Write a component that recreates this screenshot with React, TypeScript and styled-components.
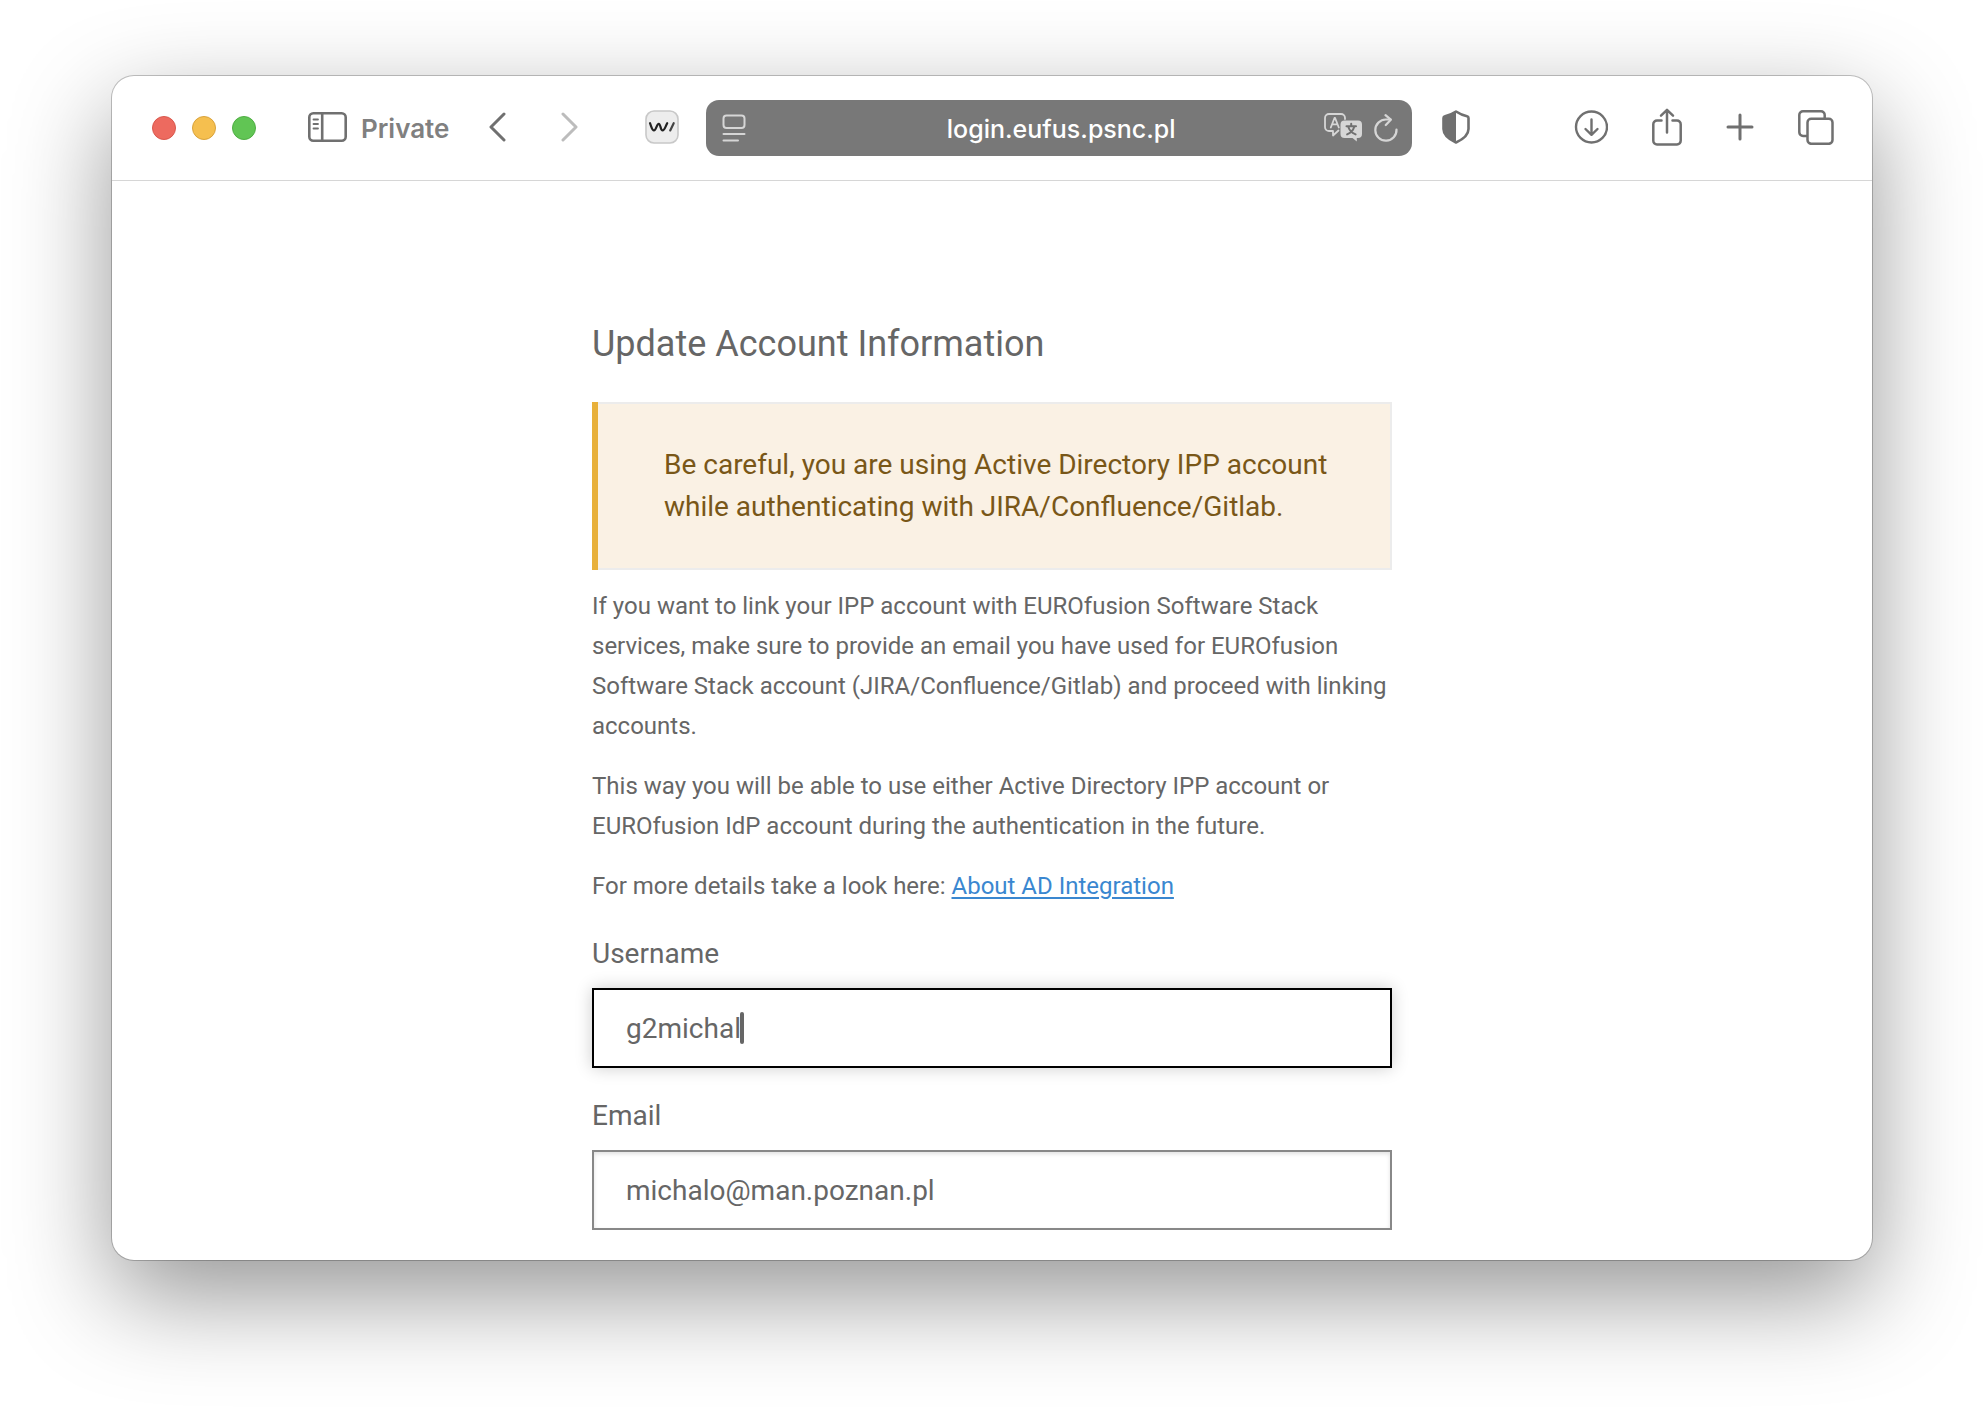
import React, { useState } from "react";
import styled, { createGlobalStyle } from "styled-components";

const GlobalStyle = createGlobalStyle`
  *, *::before, *::after { box-sizing: border-box; }
  body { margin: 0; background: #fff; }
`;

const Desktop = styled.div`
  min-height: 100vh;
  padding: 76px 112px 148px;
  overflow: hidden;
  display: flex;
  flex-direction: column;
`;

const BrowserWindow = styled.div`
  flex: 1;
  border-radius: 22px;
  background: #fff;
  box-shadow: 0 0 0 1px rgba(0, 0, 0, 0.22), 0 36px 100px rgba(0, 0, 0, 0.42);
`;

const Toolbar = styled.header`
  display: flex;
  align-items: center;
  height: 105px;
  padding: 0 38px 0 40px;
  border-bottom: 1px solid #d6d6d6;
  font-family: Inter, "Liberation Sans", sans-serif;
`;

const Group = styled.div<{ $gap: number; $after?: number }>`
  display: flex;
  align-items: center;
  gap: ${(p) => p.$gap}px;
  margin-right: ${(p) => p.$after ?? 0}px;
`;

const Light = styled.button<{ $fill: string; $edge: string }>`
  width: 24px;
  height: 24px;
  padding: 0;
  border: 1px solid ${(p) => p.$edge};
  border-radius: 50%;
  background: ${(p) => p.$fill};
`;

const IconButton = styled.button<{ $color?: string }>`
  display: flex;
  align-items: center;
  padding: 0 0 2px;
  border: 0;
  background: none;
  color: ${(p) => p.$color ?? "#707070"};

  svg { display: block; }
`;

const AddressButton = styled(IconButton)`
  padding: 0;
  color: #d6d6d6;
`;

const ModeLabel = styled.span`
  padding-top: 2px;
  color: #808080;
  font-size: 26px;
  font-weight: 600;
  line-height: 32px;
`;

const AddressBar = styled.form`
  flex: 1;
  display: grid;
  grid-template-columns: 76px 1fr 76px;
  align-items: center;
  height: 56px;
  margin-right: 30px;
  padding: 0 12px 0 16px;
  border-radius: 13px;
  background: #787878;
`;

const AddressInput = styled.input`
  width: 100%;
  min-width: 0;
  padding: 2px 0 0;
  border: 0;
  outline: 0;
  background: none;
  color: #fff;
  font: 500 25px/32px Inter, "Liberation Sans", sans-serif;
  text-align: center;
`;

const Page = styled.main`
  max-width: 800px;
  margin: 0 auto;
  padding: 141px 0 30px;
  color: #666;
  font: 400 24px/40px Roboto, "Liberation Sans", sans-serif;
`;

const Title = styled.h1`
  margin: 0 0 36px;
  font-size: 36px;
  font-weight: 400;
  line-height: 44px;
`;

const Alert = styled.div`
  margin-bottom: 16px;
  border-left: 6px solid #e8b03a;
`;

const AlertBody = styled.div`
  padding: 40px 48px 40px 66px;
  border: 2px solid #ececec;
  border-left: 0;
  background: #faf1e4;
  color: #795718;
  font-size: 28px;
  line-height: 42px;
`;

const Paragraph = styled.p`
  margin: 0 0 20px;
`;

const TextLink = styled.a`
  color: #3a87d0;
  text-decoration: underline;
  text-decoration-thickness: 2px;
  text-underline-offset: 3px;
`;

const Field = styled.div`
  padding-top: 6px;
  margin-bottom: 20px;

  &:last-child { margin-bottom: 0; }
`;

const FieldLabel = styled.label`
  display: block;
  margin-bottom: 12px;
  font-size: 28px;
  line-height: 44px;
`;

const InputFrame = styled.div`
  position: relative;
`;

const TextInput = styled.input<{ $active?: boolean }>`
  display: block;
  width: 100%;
  height: 80px;
  padding: 0 32px;
  border: 2px solid ${(p) => (p.$active ? "#000" : "#888")};
  outline: 0;
  background: #fff;
  box-shadow: ${(p) =>
    p.$active ? "0 0 16px rgba(0, 0, 0, 0.2)" : "inset 0 2px 4px rgba(0, 0, 0, 0.12)"};
  color: #666;
  font: 400 28px/40px Roboto, "Liberation Sans", sans-serif;
`;

const Caret = styled.span`
  position: absolute;
  top: 24px;
  left: 148px;
  width: 4px;
  height: 32px;
  border-radius: 2px;
  background: #666;
`;

const line = {
  fill: "none",
  stroke: "currentColor",
  strokeLinecap: "round",
  strokeLinejoin: "round",
} as const;

const SidebarIcon = () => (
  <svg width="39" height="30" viewBox="0 0 39 30" {...line} strokeWidth="2.6">
    <rect x="1.3" y="1.3" width="36.4" height="27.4" rx="4" />
    <path d="M14.2 1.5v27" />
    <path d="M5.5 7.5h4.5M5.5 12h4.5M5.5 16.5h4.5" strokeWidth="1.8" />
  </svg>
);

const Chevron = ({ back }: { back?: boolean }) => (
  <svg width="17" height="30" viewBox="0 0 17 30" {...line} strokeWidth="3">
    <path d={back ? "M15 2 2 15l13 13" : "M2 2l13 13L2 28"} />
  </svg>
);

const ExtensionIcon = () => (
  <svg width="34" height="34" viewBox="0 0 34 34">
    <rect x="1" y="1" width="32" height="32" rx="8" fill="#ededed" stroke="#c8c8c8" strokeWidth="1.6" />
    <g fill="none" stroke="#222" strokeLinecap="round" strokeLinejoin="round" strokeWidth="2.2">
      <path d="M5 13.2c1.500 3.600 2 7.200 4 7.200 2.200 0 2.600-6.600 4.800-6.600 1.800 0 1.600 6.600 3.800 6.600 2 0 2.800-4 4.600-7.200" />
      <path d="M28.700 13.200l-3.500 7.200" stroke="#444" />
    </g>
  </svg>
);

const ReaderIcon = () => (
  <svg width="24" height="28" viewBox="0 0 24 28" {...line} strokeWidth="2">
    <rect x="1.5" y="1.5" width="21" height="12.5" rx="3" />
    <path d="M1.5 20h21M1.5 26.500h14.500" />
  </svg>
);

const TranslateIcon = () => (
  <svg width="38" height="30" viewBox="0 0 38 30">
    <path
      d="M14.5 17.500 9 22.500v-4.500H5a4 4 0 0 1-4-4V5a4 4 0 0 1 4-4h12a4 4 0 0 1 4 4v1"
      {...line}
      strokeWidth="1.8"
    />
    <path d="M6.800 14.500 10.500 5h.6l3.700 9.500M8 11.300h5.600" {...line} strokeWidth="1.8" />
    <path
      d="M20.500 7.500H34a4 4 0 0 1 4 4V21a4 4 0 0 1-4 4h-1.200v3.600L28.500 25h-8a4 4 0 0 1-4-4v-9.500a4 4 0 0 1 4-4z"
      fill="currentColor"
    />
    <path
      d="M22.500 13.200h9.500M27.200 10.800v2.400M30.300 13.400c-1 3.800-3.600 6.400-7.200 8M24.200 13.400c1 3.800 3.700 6.400 7.400 8"
      {...line}
      stroke="#707070"
      strokeWidth="2"
    />
  </svg>
);

const ReloadIcon = () => (
  <svg width="24" height="28" viewBox="0 0 24 28" {...line} strokeWidth="2.2">
    <path d="M22.500 15.500A10.600 10.600 0 1 1 12 5.500h4.500" />
    <path d="M11.500 1.200 16.800 5.700l-5 5.300" />
  </svg>
);

const ShieldIcon = () => (
  <svg width="28" height="34" viewBox="0 0 28 34">
    <path d="M14 1.500c3.500 2.300 7.300 3.900 11 4.700 1 .2 1.500.8 1.500 1.800v11c0 6-5.500 10.300-12.500 13.500C7 29.300 1.500 25 1.500 19V8c0-1 .5-1.600 1.500-1.800C6.700 5.400 10.500 3.800 14 1.500z" {...line} strokeWidth="2.6" />
    <path d="M14 1.500v31C7 29.300 1.500 25 1.500 19V8c0-1 .5-1.600 1.500-1.800C6.700 5.400 10.500 3.800 14 1.500z" fill="currentColor" />
  </svg>
);

const DownloadIcon = () => (
  <svg width="34" height="34" viewBox="0 0 34 34" {...line} strokeWidth="2.4">
    <circle cx="17.5" cy="17" r="15.5" />
    <path d="M17.500 9.500v15M11.500 19l6 5.800 6-5.800" />
  </svg>
);

const ShareIcon = () => (
  <svg width="30" height="38" viewBox="0 0 30 38" {...line} strokeWidth="2.5">
    <path d="M9.500 12.500H5a3.700 3.700 0 0 0-3.700 3.700v16.500A3.700 3.700 0 0 0 5 36.400h20a3.700 3.700 0 0 0 3.700-3.700V16.200a3.700 3.700 0 0 0-3.700-3.700h-4.500" />
    <path d="M15 2v22.500M9 7.600 15 1.800l6 5.800" />
  </svg>
);

const PlusIcon = () => (
  <svg width="28" height="28" viewBox="0 0 28 28" {...line} strokeWidth="3">
    <path d="M14 2v24M2 14h24" />
  </svg>
);

const TabsIcon = () => (
  <svg width="36" height="35" viewBox="0 0 36 35" {...line} strokeWidth="2.5">
    <path d="M8.500 26H5a3.700 3.700 0 0 1-3.700-3.700V5A3.700 3.700 0 0 1 5 1.300h18A3.700 3.700 0 0 1 26.700 5v3" />
    <rect x="9.5" y="8.8" width="25" height="25" rx="3.7" />
  </svg>
);

export default function App() {
  const [address, setAddress] = useState("login.eufus.psnc.pl");
  const [username, setUsername] = useState("g2michal");
  const [email, setEmail] = useState("michalo@man.poznan.pl");

  return (
    <>
      <GlobalStyle />
      <Desktop>
        <BrowserWindow>
          <Toolbar>
            <Group $gap={16} $after={52}>
              <Light $fill="#ed6a5f" $edge="#d9584d" aria-label="Close" />
              <Light $fill="#f5bf4f" $edge="#d9a33c" aria-label="Minimize" />
              <Light $fill="#61c554" $edge="#4fae43" aria-label="Zoom" />
            </Group>
            <Group $gap={14} $after={40}>
              <IconButton aria-label="Show sidebar"><SidebarIcon /></IconButton>
              <ModeLabel>Private</ModeLabel>
            </Group>
            <Group $gap={55} $after={67}>
              <IconButton aria-label="Back"><Chevron back /></IconButton>
              <IconButton aria-label="Forward" $color="#bcbcbc"><Chevron /></IconButton>
            </Group>
            <Group $gap={0} $after={27}>
              <IconButton aria-label="Extension"><ExtensionIcon /></IconButton>
            </Group>
            <AddressBar onSubmit={(e) => e.preventDefault()}>
              <AddressButton type="button" aria-label="Page menu"><ReaderIcon /></AddressButton>
              <AddressInput aria-label="Address" value={address} onChange={(e) => setAddress(e.target.value)} />
              <Group $gap={12}>
                <AddressButton type="button" aria-label="Translate"><TranslateIcon /></AddressButton>
                <AddressButton type="button" aria-label="Reload"><ReloadIcon /></AddressButton>
              </Group>
            </AddressBar>
            <Group $gap={0} $after={104}>
              <IconButton aria-label="Privacy report"><ShieldIcon /></IconButton>
            </Group>
            <Group $gap={44}>
              <IconButton aria-label="Downloads"><DownloadIcon /></IconButton>
              <IconButton aria-label="Share"><ShareIcon /></IconButton>
              <IconButton aria-label="New tab"><PlusIcon /></IconButton>
              <IconButton aria-label="Tab overview"><TabsIcon /></IconButton>
            </Group>
          </Toolbar>
          <Page>
            <Title>Update Account Information</Title>
            <Alert role="alert">
              <AlertBody>
                Be careful, you are using Active Directory IPP account while authenticating with
                JIRA/Confluence/Gitlab.
              </AlertBody>
            </Alert>
            <Paragraph>
              If you want to link your IPP account with EUROfusion Software Stack services, make
              sure to provide an email you have used for EUROfusion Software Stack account
              (JIRA/Confluence/Gitlab) and proceed with linking accounts.
            </Paragraph>
            <Paragraph>
              This way you will be able to use either Active Directory IPP account or EUROfusion
              IdP account during the authentication in the future.
            </Paragraph>
            <Paragraph>
              For more details take a look here: <TextLink href="#about">About AD Integration</TextLink>
            </Paragraph>
            <Field>
              <FieldLabel htmlFor="username">Username</FieldLabel>
              <InputFrame>
                <TextInput id="username" $active value={username} onChange={(e) => setUsername(e.target.value)} />
                <Caret />
              </InputFrame>
            </Field>
            <Field>
              <FieldLabel htmlFor="email">Email</FieldLabel>
              <TextInput id="email" type="email" value={email} onChange={(e) => setEmail(e.target.value)} />
            </Field>
          </Page>
        </BrowserWindow>
      </Desktop>
    </>
  );
}
